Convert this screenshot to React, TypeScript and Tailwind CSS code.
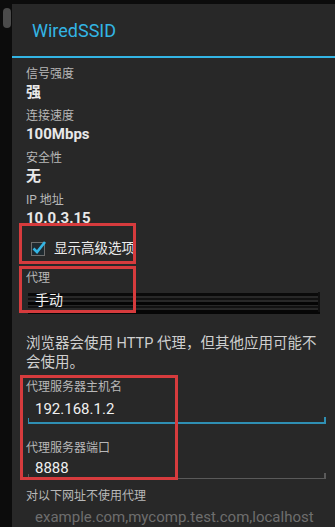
import React from "react";

const font = { fontFamily: '"Roboto", "Noto Sans CJK SC", sans-serif' };

function InfoRow({ label, value }: { label: string; value: string }) {
  return (
    <div className="mb-[6px]">
      <div className="text-[12px] leading-4 text-[#b8b8b8]">{label}</div>
      <div className="text-[15px] leading-5 font-bold text-[#e8e8e8]">{value}</div>
    </div>
  );
}

function Field({ value, focused, height }: { value: string; focused?: boolean; height: string }) {
  return (
    <div
      className={`relative ml-[2px] mr-[9px] flex items-center pl-[7px] text-[15px] text-[#f0f0f0] ${height} ${
        focused ? "border-b-2 border-[#2f8fb3]" : "border-b border-[#5a5a5a]"
      }`}
    >
      {value}
      <div className={`absolute bottom-0 left-0 h-[4px] w-px ${focused ? "bg-[#2f8fb3]" : "bg-[#5a5a5a]"}`} />
      <div className={`absolute bottom-0 right-0 h-[5px] w-[2px] ${focused ? "bg-[#2f8fb3]" : "bg-[#5a5a5a]"}`} />
    </div>
  );
}

export default function App() {
  return (
    <div className="flex h-[527px] w-[335px] overflow-hidden bg-[#0c0c0c]" style={font}>
      {/* underlying screen peeking out on the left */}
      <div className="w-3 shrink-0 pl-[3px] pt-2">
        <div className="h-5 w-2 rounded-sm bg-[#4b4b4b]" />
      </div>

      <div className="relative mt-1 flex-1 bg-[#282828]">
        <div className="flex h-[52px] items-center pl-5 text-[18px] text-[#33b5e5]">WiredSSID</div>
        <div className="h-[2px] bg-[#33b5e5]" />

        <div className="pl-[14px] pt-2">
          <InfoRow label="信号强度" value="强" />
          <InfoRow label="连接速度" value="100Mbps" />
          <InfoRow label="安全性" value="无" />
          <InfoRow label="IP 地址" value="10.0.3.15" />

          <div className="mt-[2px] flex h-7 items-center gap-[7px] pl-[5px]">
            <svg width="16" height="16" viewBox="0 0 16 16">
              <rect x="0.5" y="2.5" width="13" height="13" fill="#1f2a30" stroke="#6d6d6d" />
              <path d="M2.5 8.5 L6 12 L14 2" fill="none" stroke="#33b5e5" strokeWidth="2.6" />
            </svg>
            <span className="text-[13.5px] text-[#ededed]">显示高级选项</span>
          </div>

          <div className="mt-2 text-[12px] leading-4 text-[#b8b8b8]">代理</div>
          <div className="relative ml-[2px] mr-[15px] mt-[2px] h-7">
            <div className="flex flex-col pt-[5px]">
              <div className="h-[3px] bg-[#0a0a0a]" />
              <div className="mt-[2px] h-[2px] bg-[#111]" />
              <div className="mt-[2px] h-[3px] bg-[#050505]" />
              <div className="mt-[1px] h-[2px] bg-[#121212]" />
              <div className="mt-[2px] h-[4px] bg-[#060606]" />
            </div>
            <div className="absolute right-0 top-[4px] h-[20px] w-[2px] bg-[#101010]" />
            <div className="absolute left-[7px] top-[2px] text-[14px] leading-5 text-[#f2f2f2]">手动</div>
          </div>

          <div className="mt-[18px] whitespace-nowrap text-[14.5px] leading-[19px] text-[#cfcfcf]">
            浏览器会使用 HTTP 代理，但其他应用可能不
            <br />
            会使用。
          </div>

          <div className="mt-[7px] text-[12px] leading-4 text-[#b8b8b8]">代理服务器主机名</div>
          <div className="mt-[2px]">
            <Field value="192.168.1.2" focused height="h-[27px]" />
          </div>

          <div className="mt-4 text-[12px] leading-4 text-[#b8b8b8]">代理服务器端口</div>
          <div className="mt-[2px]">
            <Field value="8888" height="h-[21px]" />
          </div>

          <div className="mt-[9px] text-[12px] leading-4 text-[#b8b8b8]">对以下网址不使用代理</div>
          <div className="mt-[3px] pl-[9px] text-[15px] leading-5 text-[#6e6e6e]">
            example.com,mycomp.test.com,localhost
          </div>
        </div>

        {/* red annotation boxes */}
        <div className="pointer-events-none absolute left-[7px] top-[219px] h-[41px] w-[117px] border-[3px] border-[#d63b3d]" />
        <div className="pointer-events-none absolute left-[7px] top-[262px] h-[47px] w-[117px] border-[3px] border-[#d63b3d]" />
        <div className="pointer-events-none absolute left-[8px] top-[371px] h-[105px] w-[158px] border-[3px] border-[#d63b3d]" />
      </div>
    </div>
  );
}
